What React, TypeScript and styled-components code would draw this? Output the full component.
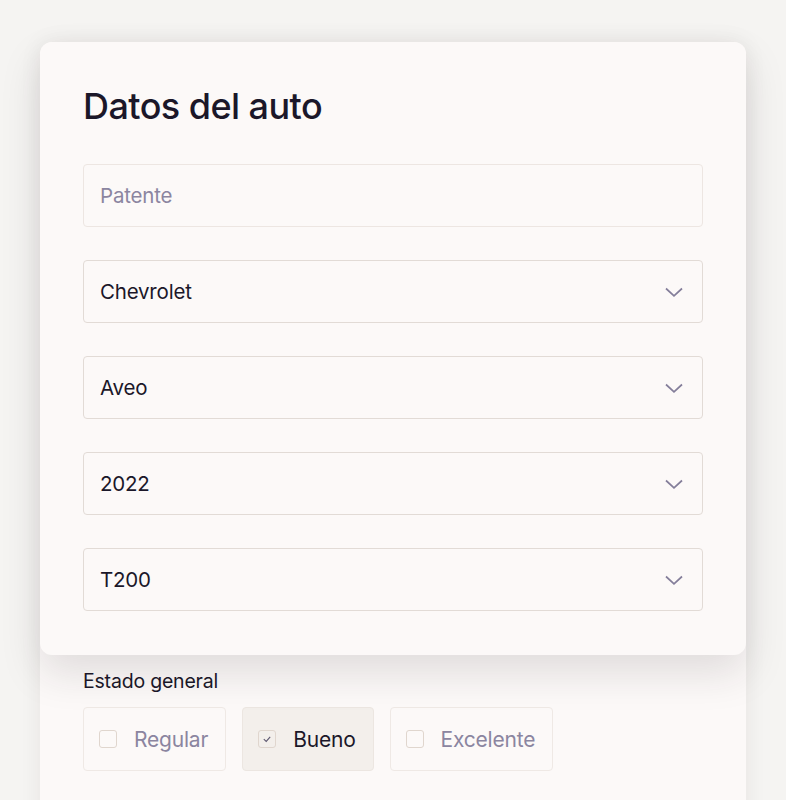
import styled, { createGlobalStyle } from "styled-components";

const GlobalStyle = createGlobalStyle`
    html, body {
        margin: 0;
        background: #f5f4f2;
        font-family: Inter, "Noto Sans", sans-serif;
        color: #1b1729;
    }
`;

const Page = styled.div`
    padding-top: 42px;
    height: 758px;
    overflow: hidden;
`;

const Panel = styled.div`
    margin: 0 40px;
    min-height: 900px;
    background: #fcf9f8;
    border-radius: 12px 12px 0 0;
    box-shadow: 0 0 22px rgba(40, 30, 30, 0.07);
`;

const Card = styled.div`
    background: #fcf9f8;
    border-radius: 12px;
    padding: 43px 43px 44px;
    box-shadow: 0 18px 40px rgba(40, 30, 40, 0.13);
    position: relative;
`;

const Title = styled.h1`
    margin: 0 0 37px;
    font-size: 36px;
    font-weight: 500;
    letter-spacing: -0.55px;
    line-height: 42px;
    color: #1b1729;
`;

const Fields = styled.div`
    display: flex;
    flex-direction: column;
    gap: 33px;
`;

const Field = styled.div<{ $placeholder?: boolean }>`
    height: 63px;
    box-sizing: border-box;
    border: 1px solid ${p => (p.$placeholder ? "#ede6e2" : "#e2dbd6")};
    border-radius: 4px;
    display: flex;
    align-items: center;
    justify-content: space-between;
    padding: 0 18px 0 16px;
    font-size: 20.5px;
    letter-spacing: -0.2px;
    color: ${p => (p.$placeholder ? "#8b85a0" : "#1b1729")};
`;

const Chevron = () => (
    <svg width="20" height="20" viewBox="0 0 20 20" fill="none">
        <path d="M2 6.5 L10 13.8 L18 6.5" stroke="#847e9a" strokeWidth="1.7" />
    </svg>
);

const Section = styled.div`
    padding: 13px 43px 0;
`;

const Label = styled.div`
    font-size: 19.5px;
    letter-spacing: -0.2px;
    line-height: 26px;
    color: #1b1729;
    margin-bottom: 13px;
`;

const Options = styled.div`
    display: flex;
    gap: 16px;
`;

const Option = styled.div<{ $selected?: boolean }>`
    height: 64px;
    box-sizing: border-box;
    display: flex;
    align-items: center;
    gap: 17px;
    padding: 0 17px 0 15px;
    border: 1px solid ${p => (p.$selected ? "#ece6e1" : "#efe9e5")};
    background: ${p => (p.$selected ? "#f3efeb" : "transparent")};
    border-radius: 4px;
    font-size: 21px;
    letter-spacing: -0.2px;
    color: ${p => (p.$selected ? "#1b1729" : "#8b85a0")};
`;

const Box = styled.span`
    width: 18px;
    height: 18px;
    box-sizing: border-box;
    border: 1.5px solid #e0d6ce;
    border-radius: 3px;
    display: flex;
    align-items: center;
    justify-content: center;
`;

const fields = [
    { text: "Patente", placeholder: true },
    { text: "Chevrolet" },
    { text: "Aveo" },
    { text: "2022" },
    { text: "T200" },
];

const options = [
    { text: "Regular" },
    { text: "Bueno", selected: true },
    { text: "Excelente" },
];

export default function App() {
    return (
        <Page>
            <GlobalStyle />
            <Panel>
                <Card>
                    <Title>Datos del auto</Title>
                    <Fields>
                        {fields.map(f => (
                            <Field key={f.text} $placeholder={f.placeholder}>
                                {f.text}
                                {!f.placeholder && <Chevron />}
                            </Field>
                        ))}
                    </Fields>
                </Card>
                <Section>
                    <Label>Estado general</Label>
                    <Options>
                        {options.map(o => (
                            <Option key={o.text} $selected={o.selected}>
                                <Box>
                                    {o.selected && (
                                        <svg width="10" height="10" viewBox="0 0 10 10" fill="none">
                                            <path d="M1.8 5.2 L4.2 7.4 L8.2 2.8" stroke="#5d5770" strokeWidth="1.1" />
                                        </svg>
                                    )}
                                </Box>
                                {o.text}
                            </Option>
                        ))}
                    </Options>
                </Section>
            </Panel>
        </Page>
    );
}
